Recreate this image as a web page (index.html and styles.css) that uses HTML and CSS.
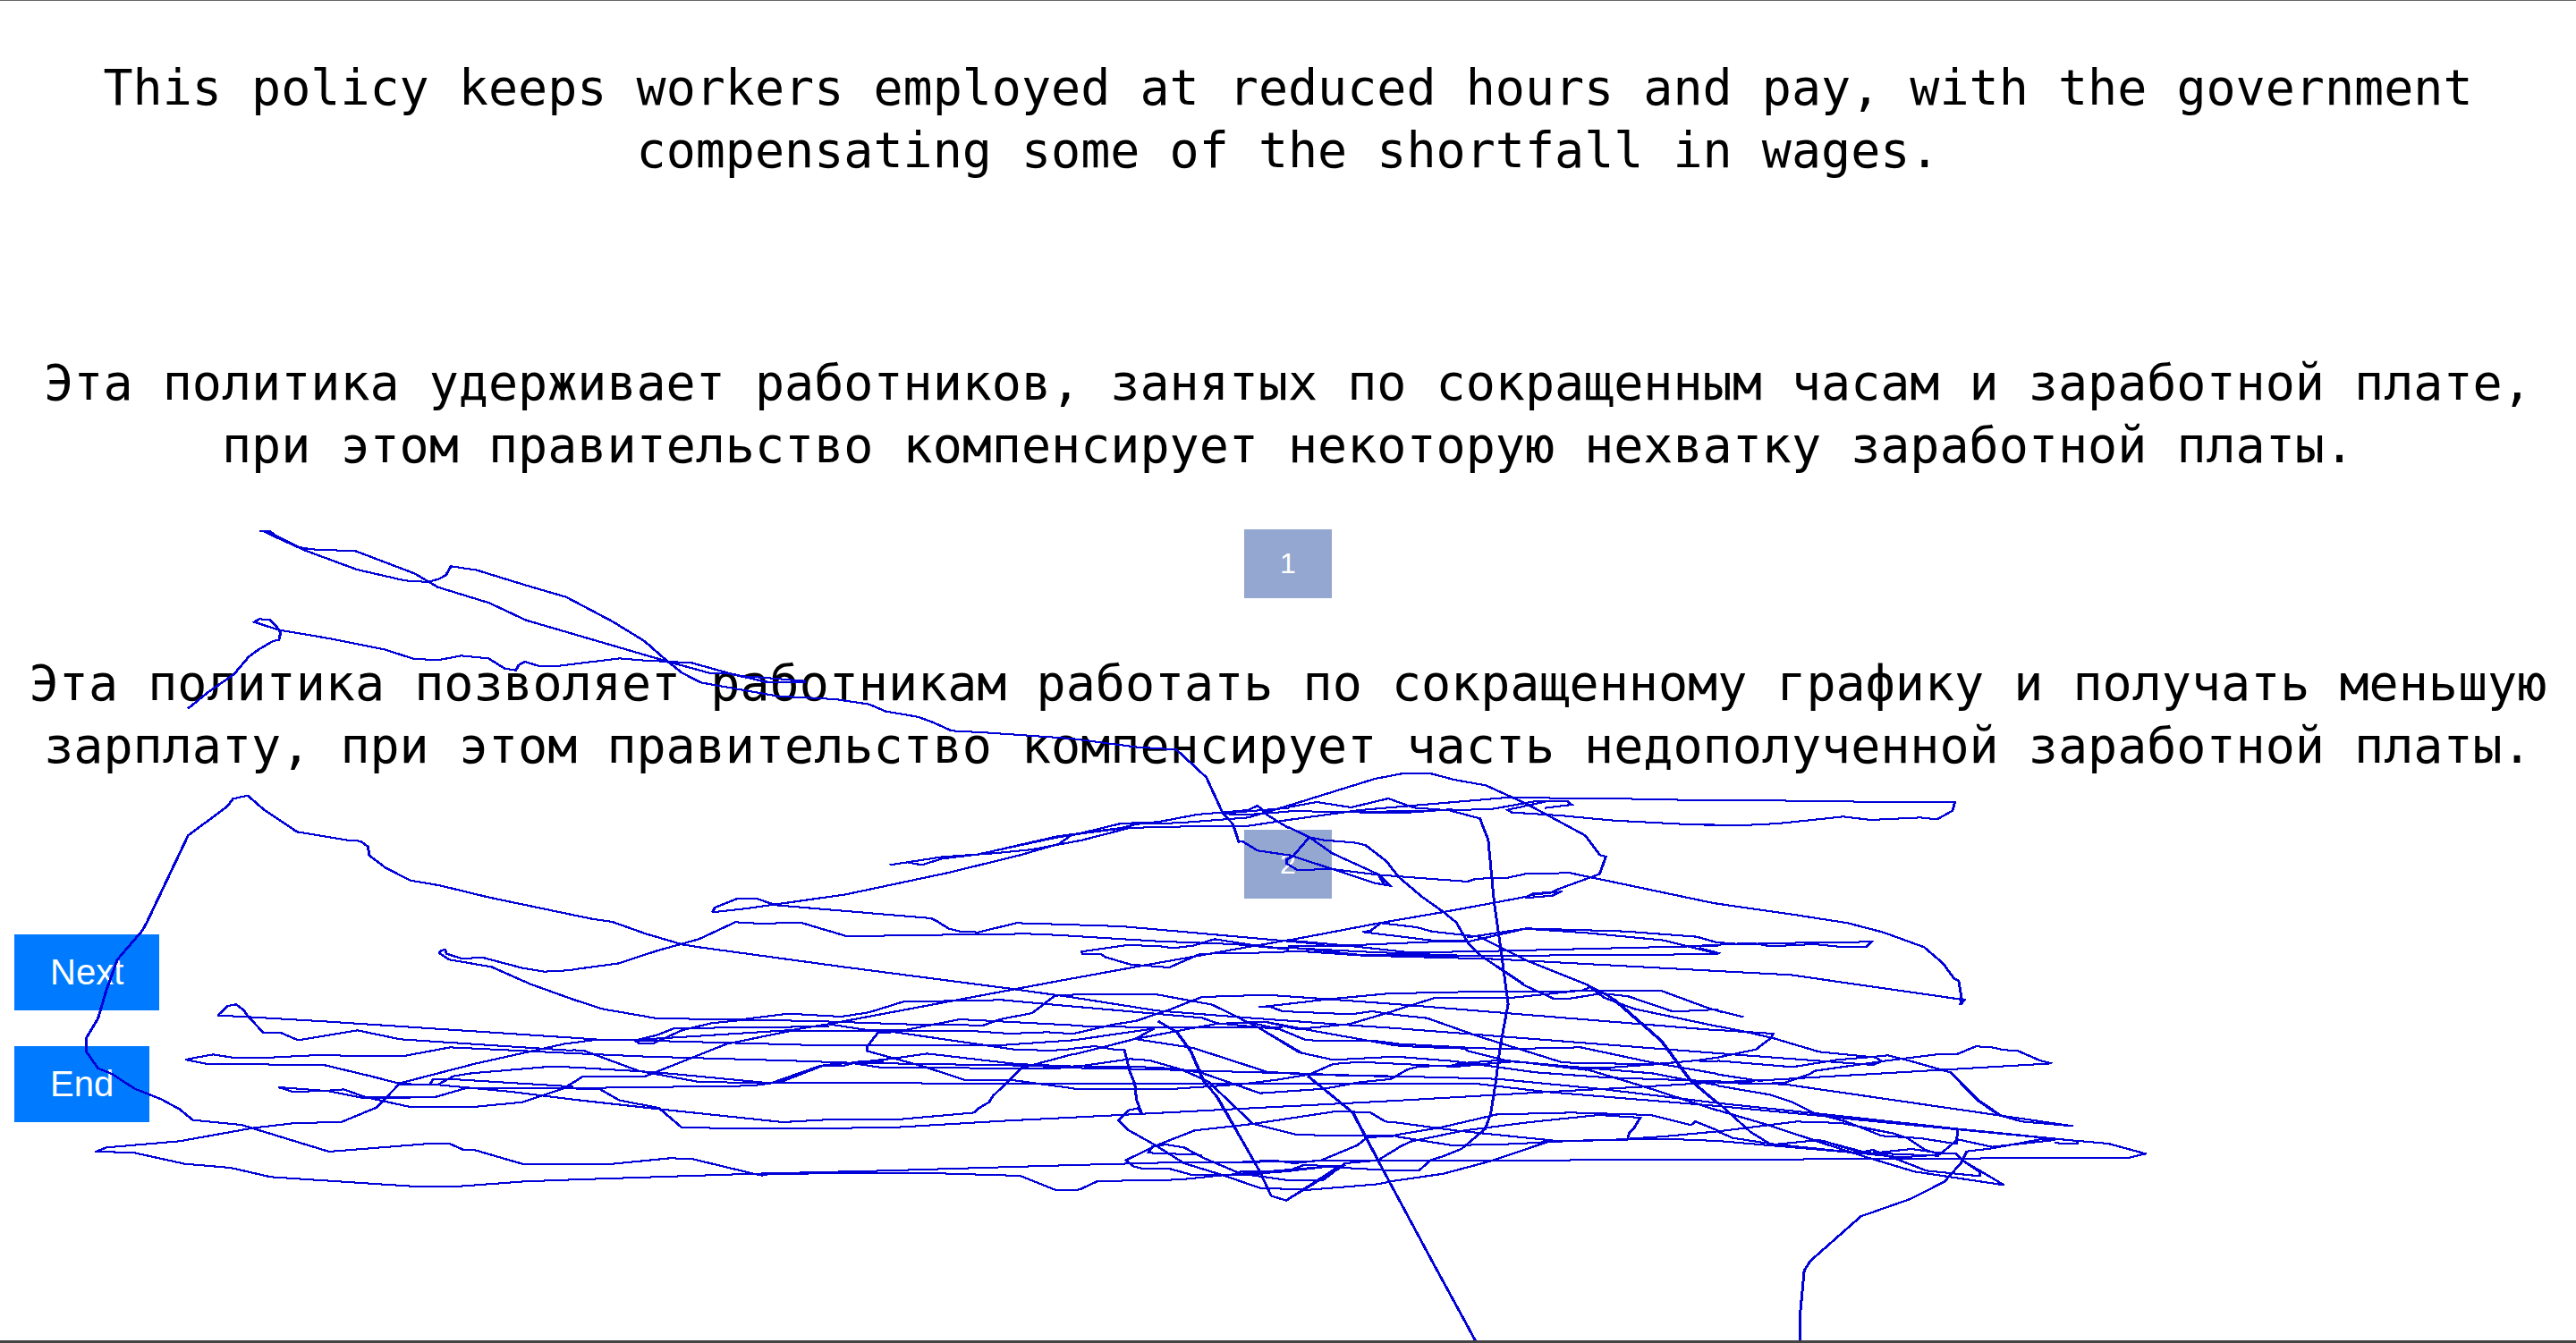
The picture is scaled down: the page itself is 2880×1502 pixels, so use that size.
FILE: index.html
```html
<!DOCTYPE html>
<html lang="ru">
<head>
<meta charset="utf-8">
<meta name="viewport" content="width=device-width, initial-scale=1">
<title>Translation choice</title>
<link rel="stylesheet" href="styles.css">
</head>
<body>
<main class="page">
  <p class="sentence" lang="en">This policy keeps workers employed at reduced hours and pay, with the government compensating some of the shortfall in wages.</p>
  <section class="option option-first">
    <p class="sentence">Эта политика удерживает работников, занятых по сокращенным часам и заработной плате, при этом правительство компенсирует некоторую нехватку заработной платы.</p>
    <button class="choice" type="button">1</button>
  </section>
  <section class="option">
    <p class="sentence">Эта политика позволяет работникам работать по сокращенному графику и получать меньшую зарплату, при этом правительство компенсирует часть недополученной заработной платы.</p>
    <button class="choice" type="button">2</button>
  </section>
  <nav class="actions">
    <button class="action" type="button">Next</button>
    <button class="action" type="button">End</button>
  </nav>

  <!-- Pointer trail, drawn over the whole page in tiles -->
  <svg class="trail" viewBox="0 0 2880 1498" preserveAspectRatio="none" aria-hidden="true">
    <svg x="0" y="560" width="720" height="470" viewBox="0 0 1568 1410" preserveAspectRatio="none">
      <polyline points="632,100 655,98 668,112 725,152 755,160 865,166 1008,241 1065,287 1190,340 1280,398 1568,514"/>
      <polyline points="640,98 675,122 742,164 868,228 985,265 1042,270 1070,258 1085,246 1097,217 1160,230 1280,281 1377,320 1490,402 1568,468"/>
      <polyline points="457,694 505,640 568,580 605,520 630,495 665,467 678,465 682,440 672,418 655,396 630,394 618,404 676,430 800,459 935,496 1005,527 1065,532 1122,517 1188,526 1228,560 1255,566 1262,548 1277,537 1312,552 1360,551 1508,526 1568,533"/>
      <polyline points="357,1410 457,1120 552,1023 566,997 602,986 640,1032 722,1108 850,1137 877,1139 895,1158 898,1187 937,1228 998,1271 1070,1288 1190,1328 1440,1400 1490,1410"/>
    </svg>
    <svg x="720" y="560" width="720" height="470" viewBox="0 0 1568 1410" preserveAspectRatio="none">
      <polyline points="0,468 58,538 92,575 137,607 325,653 465,663 547,680 588,704 665,722 698,738 748,769 830,775 1040,795 1200,824 1295,832 1368,925 1408,1045 1433,1082 1447,1142 1455,1139 1493,1171 1568,1186"/>
      <polyline points="0,514 60,538 158,575 215,578 300,607 390,607 390,600"/>
      <polyline points="0,533 115,541 230,585 285,590 390,602"/>
      <polyline points="230,585 300,605 385,605"/>
      <polyline points="598,1219 640,1210 675,1219 725,1198 810,1184 1010,1125 1040,1120 1160,1080 1250,1075 1345,1050 1470,1035 1493,1020 1515,1050 1568,1095"/>
      <polyline points="598,1219 725,1192 850,1180 945,1167 1065,1136 1175,1097 1190,1082 1300,1078 1470,1060 1568,1020"/>
      <polyline points="165,1378 250,1365 490,1318 740,1245 915,1186 1010,1148 1040,1118 1170,1095 1320,1090 1470,1088 1568,1068"/>
      <polyline points="165,1378 172,1362 228,1331 275,1333 320,1354 698,1398 715,1410"/>
      <polyline points="850,1172 1005,1123 1160,1095 1190,1085"/>
      <polyline points="1408,1048 1470,1050 1568,1040"/>
      <polyline points="1408,1046 1568,1028"/>
    </svg>
    <svg x="1440" y="800" width="480" height="350" viewBox="0 0 1440 1050" preserveAspectRatio="none">
      <polyline points="0,300 290,210 390,191 480,193 555,213 662,232 800,295 995,400 1045,466 1065,471 1043,530 905,580 885,590 820,595 795,610 885,602 917,586"/>
      <polyline points="0,752 300,695 520,657 690,626 795,606 820,599 900,590"/>
      <polyline points="0,318 210,322 550,315 680,312 830,285 935,285 950,297 860,308"/>
      <polyline points="860,287 735,314 750,323 910,333 1090,350 1320,362 1440,366"/>
      <polyline points="0,305 95,288 210,306 335,276 420,307 540,316 642,343 670,415 690,625 712,780 728,900"/>
      <polyline points="0,348 240,315 720,274 1020,275 1330,281 1440,282"/>
      <polyline points="210,322 380,325 550,312"/>
      <polyline points="0,372 70,406 147,460 300,530 342,569 290,560 148,513 0,465"/>
      <polyline points="70,406 120,416 220,424 257,432 328,486 370,540 447,605 520,657 563,692 605,765 640,800 785,898"/>
      <polyline points="258,432 328,486 370,540 447,605 520,657 563,692 605,765 640,800 788,898"/>
      <polyline points="70,406 15,470 -5,480 -5,495 30,516 145,513 300,532 600,555 630,545 730,543 800,528 945,526 1440,630"/>
      <polyline points="300,530 320,563 342,569"/>
      <polyline points="0,752 200,770 400,792 600,790 1440,770"/>
      <polyline points="0,772 180,770 480,757 600,757 720,730 795,713 1000,727 1260,752 1440,797"/>
      <polyline points="250,724 480,752 600,753"/>
      <polyline points="250,724 275,720 310,694 430,708 480,722 640,740 800,820 1000,900"/>
      <polyline points="600,742 800,712 1130,722 1370,740 1440,760"/>
      <polyline points="0,775 250,802 640,803 1150,802 1440,797"/>
      <polyline points="0,777 250,790 430,798 640,805"/>
      <polyline points="0,790 60,790 250,803 700,815 1440,855"/>
    </svg>
    <svg x="1900" y="800" width="540" height="350" viewBox="0 0 1568 1050" preserveAspectRatio="none">
      <polyline points="0,282 240,283 535,287 828,288 820,317 770,346 715,340 555,348 465,337 255,360 120,367 0,363"/>
      <polyline points="0,618 50,628 300,665 480,694 595,725 728,775 790,830 825,880 840,888 850,950 845,968 860,952 295,868 0,852"/>
      <polyline points="0,743 50,758 130,765 330,760 557,757 540,773 450,773 370,765 230,772 170,761 0,770"/>
      <polyline points="0,778 65,796 0,797"/>
    </svg>
    <svg x="0" y="1000" width="640" height="400" viewBox="0 0 1568 1200" preserveAspectRatio="none">
      <polyline points="402,90 388,120 320,217 290,320 267,415 235,480 235,525 267,581 305,600 368,650 440,685 490,718 527,755 660,771 900,861 1175,834 1230,834 1270,856 1300,856 1435,904 1568,903"/>
      <polyline points="595,404 622,372 645,367 665,385 680,410 720,461 768,462 815,487 978,454 1095,484 1568,522"/>
      <polyline points="595,404 680,409 900,425 1568,479"/>
      <polyline points="507,552 582,535 645,547 710,547 885,536 975,541 1105,540 1232,511 1568,531"/>
      <polyline points="507,552 570,568 882,569 1015,608 1095,633 1175,637 1185,618 1240,618 1568,643"/>
      <polyline points="260,862 290,847 490,826 690,782 800,766 935,761 1030,713 1095,631 1300,566 1550,498 1568,496"/>
      <polyline points="260,862 360,863 505,902 630,915 740,946 1125,977 1260,977 1435,961 1568,955"/>
      <polyline points="762,645 800,660 890,657 940,652 1000,678 1190,678 1275,648 1568,648"/>
      <polyline points="762,645 900,658 990,680 1122,680"/>
      <polyline points="1000,678 1122,711 1295,711 1430,695 1540,650 1568,630"/>
      <polyline points="1095,637 1200,635 1240,608 1290,598 1510,575 1568,578"/>
      <polyline points="1200,637 1400,660 1568,686"/>
      <polyline points="1568,350 1450,298 1345,241 1230,217 1202,195 1208,185 1218,184 1222,197 1260,212 1325,211 1430,245 1490,257 1568,252"/>
    </svg>
    <svg x="640" y="960" width="640" height="400" viewBox="0 0 1568 1200" preserveAspectRatio="none">
      <polyline points="108,210 200,250 300,286 340,294 740,361 1210,436 1372,464"/>
      <polyline points="0,370 127,349 230,307 345,268 445,211 515,216 623,212 752,259 915,255 1245,250 1323,254"/>
      <polyline points="1000,210 1030,233 1060,242 1110,245 1215,214 1323,218"/>
      <polyline points="0,470 80,502 230,534 460,538 590,518 735,528 810,514 905,478 1175,472 1372,494"/>
      <polyline points="0,599 70,605 180,605 230,590 280,566 500,565 700,560"/>
      <polyline points="170,607 180,617 218,619 300,573 380,550 460,540 640,542 950,555 1125,557 1170,537 1258,516 1320,458 1405,452"/>
      <polyline points="0,616 60,606 180,605 280,598 600,573 700,553 1210,436 1323,410"/>
      <polyline points="160,607 400,615 640,623 1170,624 1372,607"/>
      <polyline points="0,651 200,662 600,676 760,683 840,698 1230,702 1372,700"/>
      <polyline points="0,640 30,642 180,710 345,747 500,750 545,750 680,692 740,693 790,677 850,678"/>
      <polyline points="0,698 230,715 530,750 1372,753"/>
      <polyline points="0,750 25,730 195,730 420,620 600,575 860,577 1080,575 1195,585 1300,580 1372,586"/>
      <polyline points="0,768 490,760 570,747 690,690 790,680 880,668 970,652 1215,687 1372,695"/>
      <polyline points="10,770 75,772 128,809 235,834 298,900 500,904 690,903 890,899 1190,877 1372,866"/>
      <polyline points="0,806 235,838 575,882 720,872 900,872 1100,850 1108,838 1140,815 1150,795 1230,700 1372,653"/>
      <polyline points="700,553 800,572 910,573 1060,537 1372,557"/>
      <polyline points="760,683 1230,692 1372,698"/>
      <polyline points="870,583 835,583 805,630 805,643 960,695 1075,741 1210,742 1372,769"/>
      <polyline points="870,578 1220,640 1320,641 1372,636"/>
      <polyline points="0,1023 110,1022 265,1003 325,1005 495,1055 518,1061 540,1055 980,1053 1225,1062 1325,1111 1372,1110"/>
      <polyline points="0,1075 500,1055 850,1045 1372,1026"/>
    </svg>
    <svg x="1180" y="1000" width="300" height="120" viewBox="0 0 900 360" preserveAspectRatio="none">
      <polyline points="0,98 220,105 480,128 780,155 900,166"/>
      <polyline points="0,134 340,155 600,165 780,182"/>
      <polyline points="85,190 232,169 335,170 392,178 460,170 532,148 660,168 740,177 780,176"/>
      <polyline points="85,190 90,197 150,197 165,208 250,233 380,243 485,197 640,195 780,190"/>
      <polyline points="0,290 290,237 640,175 780,151"/>
    </svg>
    <svg x="1200" y="1100" width="400" height="402" viewBox="0 0 1200 1206" preserveAspectRatio="none">
      <polyline points="0,44 280,88 560,110 900,135 1080,147"/>
      <polyline points="0,33 280,34 465,68 620,145 765,230 870,253 1080,242"/>
      <polyline points="565,118 620,145 700,194 760,230"/>
      <polyline points="0,74 430,112 480,130 690,150"/>
      <polyline points="0,137 60,142 700,145"/>
      <polyline points="0,165 130,135 210,122 320,85 430,42 650,35 860,50 1080,66"/>
      <polyline points="0,187 270,148 205,183 400,213 650,294 790,300 1080,310"/>
      <polyline points="0,235 205,183 380,150 480,132 640,125 750,150 925,133 1080,87"/>
      <polyline points="0,215 70,207 140,219 170,220 187,290 205,335 210,385 228,433 215,415 185,422 150,455 180,487 275,540 370,600 500,640 625,683 790,689 1020,670 1080,658"/>
      <polyline points="0,277 190,250 255,255 360,285 450,325"/>
      <polyline points="0,280 270,285 720,298 790,303 1080,308"/>
      <polyline points="0,274 270,278 360,285 430,297 625,365 840,350 960,328 1060,318 1080,308"/>
      <polyline points="0,333 1080,333"/>
      <polyline points="0,350 340,350 560,335 680,320 790,302 870,267 960,260 1080,266"/>
      <polyline points="0,446 1080,390"/>
      <polyline points="283,124 345,160 392,225 435,325 480,375 515,435 625,630 662,709 712,725 890,610 770,606 715,627 550,640 400,640 320,618 230,618 200,610 175,590 270,543 405,490 600,468 885,425 995,430 1045,460 1080,463"/>
      <polyline points="285,124 347,160 394,225 437,325 478,375 513,435 600,585"/>
      <polyline points="450,325 600,467 750,505 1080,508"/>
      <polyline points="265,543 250,565 430,572"/>
      <polyline points="265,543 310,537 370,547 430,580 560,635 720,657 835,657 910,600 1020,590 1110,535"/>
      <polyline points="712,725 905,608 880,608 715,627 560,628 540,640"/>
      <polyline points="0,606 340,597 540,597 670,590 740,600 830,590 950,540 985,513 1080,508"/>
      <polyline points="540,597 830,592 1080,591"/>
      <polyline points="0,690 20,688 80,660 355,655 500,640 620,630 760,618 850,612 1080,625"/>
      <polyline points="785,308 935,430 1020,590 1200,925 1353,1206"/>
      <polyline points="787,308 937,430 1020,588"/>
      <polyline points="622,76 660,72 850,50 1060,30 1080,30"/>
      <polyline points="622,76 660,75 700,90 930,100 1000,90 1080,102"/>
      <polyline points="600,130 690,150 780,187 900,190 1000,188 1080,198"/>
      <polyline points="640,125 800,155 1080,205"/>
    </svg>
    <svg x="1560" y="1100" width="400" height="402" viewBox="0 0 1200 1206" preserveAspectRatio="none">
      <polyline points="0,30 280,24 890,21 1050,80 1165,109"/>
      <polyline points="0,86 135,44 395,44 625,20 655,8"/>
      <polyline points="425,0 530,48 580,48 690,30 780,40 930,91 1080,84"/>
      <polyline points="640,0 700,45 800,82 1080,141"/>
      <polyline points="640,0 720,42 890,190 985,320 1080,400"/>
      <polyline points="690,25 740,55 893,190 988,320 1083,400"/>
      <polyline points="0,66 1080,154"/>
      <polyline points="0,102 105,113 280,175 560,262 860,268"/>
      <polyline points="0,147 1080,231"/>
      <polyline points="0,199 240,212 360,217 620,211 860,262 1080,300"/>
      <polyline points="0,205 80,210 235,215 240,223 370,255 640,285 840,345 1080,423"/>
      <polyline points="0,242 200,258 470,295 700,312 870,318 1080,325"/>
      <polyline points="0,266 200,276 400,258 640,287"/>
      <polyline points="0,308 40,285 75,276 280,268 400,258 620,280 700,280 870,268 1010,255 1080,245"/>
      <polyline points="200,266 340,255 470,265 580,275 860,298 1000,325 1080,338"/>
      <polyline points="860,268 1000,256 1080,258"/>
      <polyline points="0,308 340,317 700,352 1080,398"/>
      <polyline points="0,333 270,333 500,360 1080,408"/>
      <polyline points="0,390 520,360 800,345 1080,328"/>
      <polyline points="0,463 200,490 540,525 720,522 900,510 1080,493"/>
      <polyline points="0,505 150,480 340,436 590,430 855,438 990,472 1005,460 1080,490"/>
      <polyline points="0,510 190,540 400,535 560,525 900,518 1080,525"/>
      <polyline points="0,552 50,527 230,490 450,462 680,438 820,447 800,480 785,495 778,515"/>
      <polyline points="0,591 580,591 590,588 1080,588"/>
      <polyline points="0,625 80,623 115,590 160,576 220,552 300,485 318,435 335,330 350,210 377,65 368,0"/>
      <polyline points="0,658 160,635 320,592 510,528 780,520"/>
    </svg>
    <svg x="1920" y="1100" width="500" height="402" viewBox="0 0 1500 1206" preserveAspectRatio="none">
      <polyline points="0,90 30,95 85,109"/>
      <polyline points="0,140 90,158 185,180 340,226 530,245 550,258 520,270 0,231"/>
      <polyline points="0,153 185,165 180,178 128,218 0,245"/>
      <polyline points="0,256 250,277 400,253 530,242 570,238 640,255 780,295 870,385 950,440 1020,460 1190,475"/>
      <polyline points="785,300 873,390 945,440"/>
      <polyline points="1190,475 225,335 0,330"/>
      <polyline points="0,325 140,333 225,330 310,300 325,290 550,258 740,234 805,233 865,208 915,210 960,220 1005,222 1080,255 1120,265 780,285 180,320 0,328"/>
      <polyline points="0,302 150,325"/>
      <polyline points="0,340 175,370 250,395 320,430 430,460 550,508 680,516 800,535 805,485"/>
      <polyline points="0,398 380,438 800,484 1205,525 1205,535 1130,532"/>
      <polyline points="0,408 380,444 480,455 1130,518 1310,534 1435,568 1380,581 0,588"/>
      <polyline points="0,396 110,495 180,538 340,522 500,565 740,575"/>
      <polyline points="0,422 170,472 360,535 500,580 660,628 960,673 820,590 880,630 878,643 700,625 520,555 470,565"/>
      <polyline points="0,493 265,460 415,465 590,500 635,515 695,555 745,570 805,520 920,545 1130,522"/>
      <polyline points="415,455 480,480 590,500"/>
      <polyline points="0,493 50,515 180,535 610,580 740,572"/>
      <polyline points="0,525 500,568 650,552 740,565 800,568 820,590 955,670"/>
      <polyline points="350,523 400,540 470,560 520,570"/>
      <polyline points="835,560 815,600 760,662 645,720 480,778 310,928 290,960 275,1120 277,1206"/>
      <polyline points="835,560 920,550 1080,520 1130,522"/>
    </svg>
  </svg>
</main>
</body>
</html>
```
FILE: styles.css
```css
* {
  box-sizing: border-box;
}

body {
  margin: 0;
  background: #fff;
  color: #000;
}

.page {
  position: relative;
  display: flex;
  flex-direction: column;
  min-height: 100vh;
  padding: 62px 16px 0;
  border-top: 1px solid #666;
  border-bottom: 3px solid #444;
}

.sentence {
  margin: 0;
  font: 55px/70px "DejaVu Sans Mono", monospace;
  text-align: center;
}

.option {
  display: flex;
  flex-direction: column;
  align-items: center;
  gap: 59px;
  margin-top: 60px;
}

.option-first {
  margin-top: 190px;
}

.choice,
.action {
  border: 0;
  padding: 20px 40px;
  color: #fff;
  font-family: "Liberation Sans", Arial, sans-serif;
  cursor: pointer;
}

.choice {
  background: #94a7d0;
  font-size: 32px;
  line-height: 37px;
}

.action {
  background: #007bff;
  font-size: 40px;
  line-height: 45px;
}

.actions {
  display: flex;
  flex-direction: column;
  align-items: flex-start;
  gap: 40px;
  margin-top: 40px;
}

.trail {
  position: absolute;
  inset: 0;
  width: 100%;
  height: 100%;
  pointer-events: none;
  filter: drop-shadow(1px 0 0 #0000d8);
}

.trail svg {
  overflow: visible;
}

.trail polyline {
  fill: none;
  stroke: #0000d8;
  stroke-width: 2px;
  vector-effect: non-scaling-stroke;
  shape-rendering: crispEdges;
}
```
